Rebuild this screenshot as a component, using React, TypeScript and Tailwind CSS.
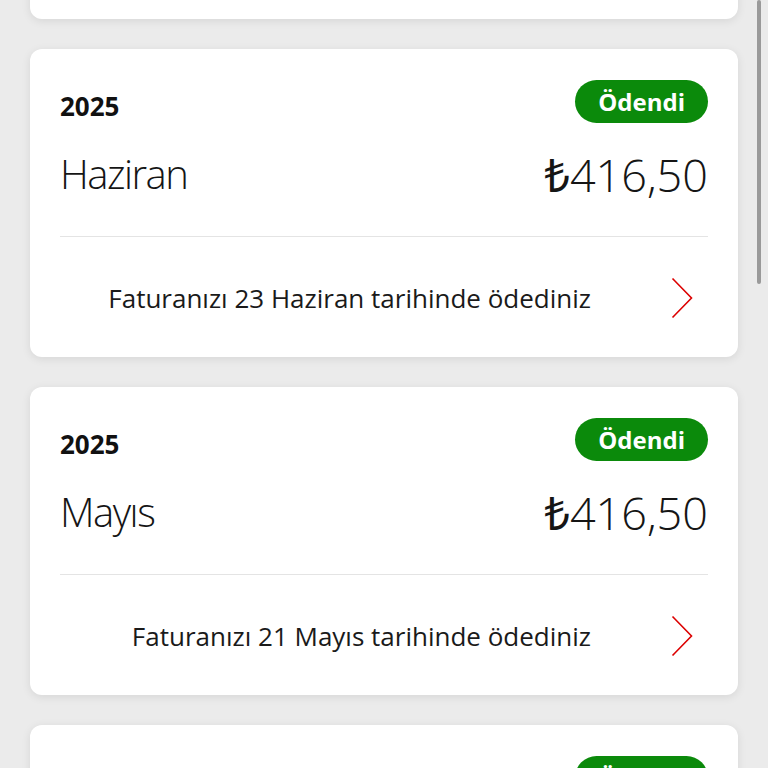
import React from "react";

type Bill = { year: string; month: string; amount: string; note: string };

const bills: Bill[] = [
  { year: "2025", month: "Temmuz", amount: "416,50", note: "Faturanızı 22 Temmuz tarihinde ödediniz" },
  { year: "2025", month: "Haziran", amount: "416,50", note: "Faturanızı 23 Haziran tarihinde ödediniz" },
  { year: "2025", month: "Mayıs", amount: "416,50", note: "Faturanızı 21 Mayıs tarihinde ödediniz" },
  { year: "2025", month: "Nisan", amount: "416,50", note: "Faturanızı 22 Nisan tarihinde ödediniz" },
];

function Chevron() {
  return (
    <svg width="22" height="42" viewBox="0 0 22 42" className="shrink-0">
      <polyline points="1.5,1.5 20.5,21 1.5,40.5" fill="none" stroke="#dc0000" strokeWidth="1.6" />
    </svg>
  );
}

function Card({ bill }: { bill: Bill }) {
  return (
    <div className="h-[308px] shrink-0 rounded-[12px] bg-white px-[30px] pt-[31px] shadow-[0_2px_10px_rgba(0,0,0,0.09)]">
      <div className="flex h-[43px] items-center justify-between">
        <span className="pt-[9px] text-[26px] font-bold leading-none text-[#111]">{bill.year}</span>
        <span className="flex h-[43px] items-center rounded-full bg-[#0b8a0b] px-[23px] text-[24px] font-bold leading-none text-white">
          Ödendi
        </span>
      </div>
      <div className="mt-[25px] flex h-[52px] items-center justify-between text-[#151515]">
        <span className="text-[40px] font-light leading-none tracking-[-1.5px]">{bill.month}</span>
        <span className="text-[45px] font-light leading-none">
          <span className="font-normal">₺</span>
          {bill.amount}
        </span>
      </div>
      <div className="mt-[36px] h-px bg-[#e4e4e4]" />
      <div className="mt-[41px] flex h-[40px] items-center justify-end pr-[15px]">
        <span className="mr-[80px] text-[26px] leading-none text-[#1a1a1a]">{bill.note}</span>
        <Chevron />
      </div>
    </div>
  );
}

export default function App() {
  return (
    <div
      className="relative h-screen overflow-hidden bg-[#ebebeb]"
      style={{ fontFamily: '"Open Sans", "Noto Sans", "DejaVu Sans", sans-serif' }}
    >
      <div className="mt-[-289px] flex flex-col gap-[30px] px-[30px]">
        {bills.map((b) => (
          <Card key={b.month} bill={b} />
        ))}
      </div>
      <div className="absolute right-[7px] top-0 h-[284px] w-[4px] rounded-full bg-[#9a9a9a]" />
    </div>
  );
}
